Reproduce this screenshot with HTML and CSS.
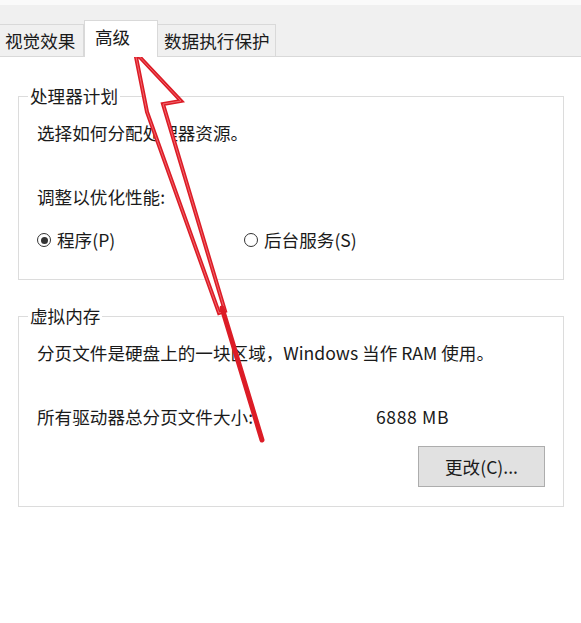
FILE: index.html
```html
<!DOCTYPE html>
<html lang="zh-CN">
<head>
<meta charset="utf-8">
<title>系统属性 - 高级</title>
<link rel="stylesheet" href="styles.css">
</head>
<body>
<div class="page">
  <div class="top-strip"></div>
  <div class="tabbar">
    <div class="tab tab-first">视觉效果</div>
    <div class="tab tab-active">高级</div>
    <div class="tab tab-last">数据执行保护</div>
  </div>
  <div class="panel">
    <fieldset class="group group-cpu">
      <legend>处理器计划</legend>
      <div class="line">选择如何分配处理器资源。</div>
      <div class="line line-gap">调整以优化性能:</div>
      <div class="radios">
        <label class="radio radio-first"><span class="dot checked"></span>程序(P)</label>
        <label class="radio radio-second"><span class="dot"></span>后台服务(S)</label>
      </div>
    </fieldset>
    <fieldset class="group group-mem">
      <legend>虚拟内存</legend>
      <div class="line">分页文件是硬盘上的一块区域，Windows 当作 RAM 使用。</div>
      <div class="line line-gap size-row">
        <span class="size-label">所有驱动器总分页文件大小:</span>
        <span class="size-value">6888 MB</span>
      </div>
      <div class="btn-row">
        <button class="btn" type="button">更改(C)...</button>
      </div>
    </fieldset>
  </div>
  <svg class="arrow" width="581" height="623" viewBox="0 0 581 623" aria-hidden="true">
    <polygon points="135,52 181,101 163,104 225,311 219,313 147,112" fill="#ffffff" stroke="#dc1c26" stroke-width="4" stroke-linejoin="miter"/>
    <polygon points="135,52 181,101 163,104 225,311 219,313 147,112" fill="none" stroke="#f1646c" stroke-width="1"/>
    <line x1="222" y1="308" x2="262" y2="440" stroke="#dc1c26" stroke-width="5" stroke-linecap="round"/>
  </svg>
</div>
</body>
</html>
```
FILE: styles.css
```css
html, body {
  margin: 0;
  padding: 0;
  background: #ffffff;
}

body {
  font-family: "Noto Sans CJK SC", "Noto Sans", sans-serif;
  font-size: 17.6px;
  color: #1a1a1a;
}

.page {
  position: relative;
  width: 581px;
  height: 623px;
  overflow: hidden;
}

.top-strip {
  height: 5px;
  background: #fafafa;
}

.tabbar {
  height: 51px;
  background: #f0f0f0;
  border-bottom: 1px solid #d9d9d9;
  display: flex;
  align-items: flex-end;
}

.tab {
  height: 31px;
  line-height: 31px;
  background: #f0f0f0;
  border: 1px solid #d9d9d9;
  border-bottom: none;
  white-space: nowrap;
  box-sizing: content-box;
  overflow: hidden;
}

.tab-first {
  padding: 0 6px 0 5px;
  border-left: none;
  width: 72px;
}

.tab-active {
  height: 36px;
  line-height: 32px;
  background: #ffffff;
  margin-bottom: -1px;
  padding: 0 20px 0 10px;
  width: 42px;
  position: relative;
  z-index: 1;
}

.tab-last {
  padding: 0 4px 0 6px;
  border-left: none;
  width: 107px;
}

.panel {
  display: flex;
  flex-direction: column;
  padding: 0 17px 0 18px;
}

.group {
  margin: 0;
  border: 1px solid #dcdcdc;
  padding: 13px 18px 0 18px;
  min-width: 0;
}

.group legend {
  padding: 0 2px;
  margin-left: -9px;
  line-height: 24px;
}

.group-cpu {
  margin-top: 27px;
  padding-bottom: 27px;
}

.group-mem {
  margin-top: 24px;
  padding-bottom: 19px;
}

.line {
  line-height: 24px;
  height: 24px;
  white-space: nowrap;
}

.line-gap {
  margin-top: 40px;
}

.radios {
  display: flex;
  margin-top: 19px;
  line-height: 24px;
}

.radio {
  display: flex;
  align-items: center;
  white-space: nowrap;
}

.radio-first {
  width: 207px;
}

.dot {
  width: 12px;
  height: 12px;
  border: 1.5px solid #333333;
  border-radius: 50%;
  margin-right: 6px;
  position: relative;
  flex: none;
}

.dot.checked::after {
  content: "";
  position: absolute;
  left: 2.5px;
  top: 2.5px;
  width: 7px;
  height: 7px;
  border-radius: 50%;
  background: #333333;
}

.size-row {
  display: flex;
}

.size-label {
  width: 339px;
}

.size-value {
  letter-spacing: 0.6px;
}

.btn-row {
  display: flex;
  justify-content: flex-end;
  margin-top: 17px;
}

.btn {
  width: 127px;
  height: 41px;
  background: #e1e1e1;
  border: 1px solid #adadad;
  font-family: inherit;
  font-size: 17.6px;
  color: #1a1a1a;
  padding: 0;
  margin: 0;
}

.arrow {
  position: absolute;
  left: 0;
  top: 0;
  pointer-events: none;
}
```
